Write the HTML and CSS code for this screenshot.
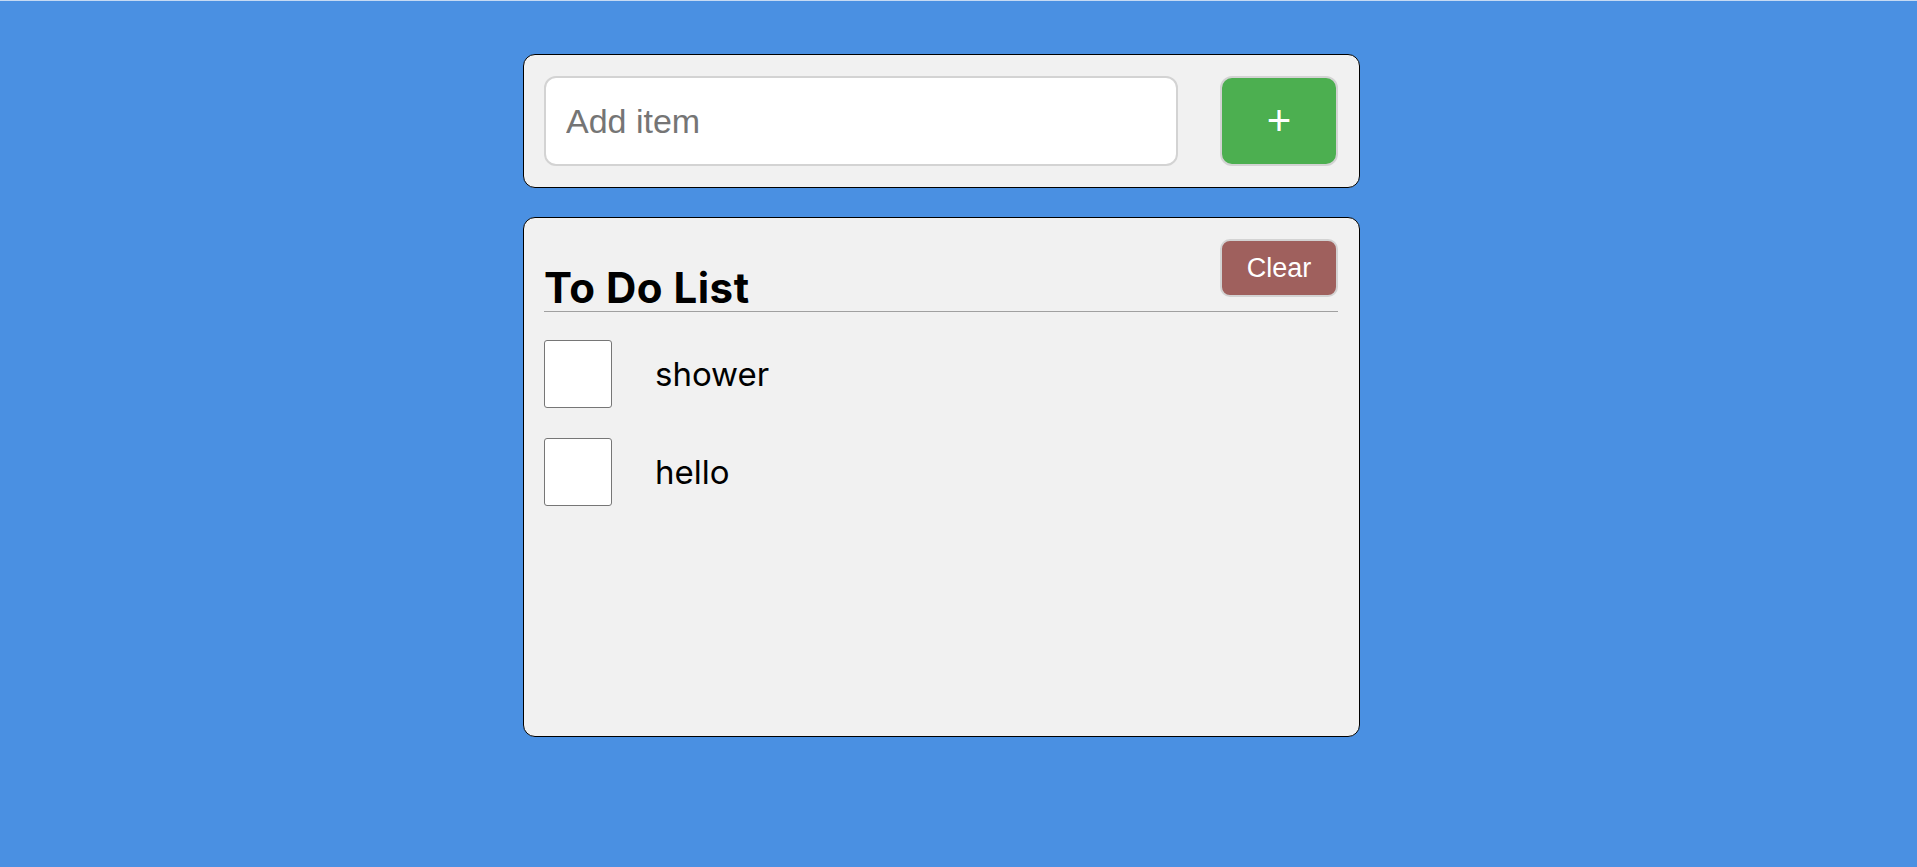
FILE: index.html
```html
<!DOCTYPE html>
<html>
<head>
<meta charset="utf-8">
<title>To Do</title>
<link rel="stylesheet" href="styles.css">
</head>
<body>
<main class="app">
  <form class="card add-card">
    <input class="add-input" type="text" placeholder="Add item">
    <button class="add-btn" type="button">+</button>
  </form>
  <section class="card list-card">
    <header class="list-head">
      <h1 class="list-title">To Do List</h1>
      <button class="clear-btn" type="button">Clear</button>
    </header>
    <ul class="items">
      <li class="item"><input class="check" type="checkbox"><span class="item-text">shower</span></li>
      <li class="item"><input class="check" type="checkbox"><span class="item-text">hello</span></li>
    </ul>
  </section>
</main>
</body>
</html>
```
FILE: styles.css
```css
html, body {
  margin: 0;
  padding: 0;
}
body {
  background: #4a90e2;
  border-top: 1px solid #c6daf3;
  min-height: 866px;
  font-family: "Inter", "Liberation Sans", sans-serif;
}
.app {
  display: flex;
  flex-direction: column;
  gap: 29px;
  width: 837px;
  margin-left: 523px;
  padding-top: 53px;
}
.card {
  box-sizing: border-box;
  background: #f1f1f1;
  border: 1px solid #000;
  border-radius: 12px;
  margin: 0;
}
.add-card {
  display: flex;
  align-items: center;
  padding: 21px 21px 21px 20px;
  height: 134px;
}
.add-input {
  box-sizing: border-box;
  width: 634px;
  height: 90px;
  border: 2px solid #d3d3d3;
  border-radius: 12px;
  background: #fff;
  padding: 0 20px;
  font-family: "Liberation Sans", Arial, sans-serif;
  font-size: 34px;
  color: #333;
  outline: none;
}
.add-input::placeholder {
  color: #757575;
}
.add-btn {
  box-sizing: border-box;
  margin-left: auto;
  width: 118px;
  height: 90px;
  border: 2px solid #d3d3d3;
  border-radius: 12px;
  background: #4caf50;
  color: #fff;
  font-family: "Liberation Sans", Arial, sans-serif;
  font-size: 42px;
  font-weight: 400;
  line-height: 1;
  padding: 0;
}
.list-card {
  height: 520px;
  padding: 21px 21px 20px 20px;
}
.list-head {
  display: flex;
  justify-content: space-between;
  align-items: flex-end;
  border-bottom: 1px solid #a0a0a0;
  height: 73px;
  box-sizing: border-box;
}
.list-title {
  margin: 0 0 2px 0;
  font-size: 42px;
  font-weight: 700;
  line-height: 1;
  color: #000;
  letter-spacing: 0.5px;
}
.clear-btn {
  align-self: flex-start;
  box-sizing: border-box;
  width: 118px;
  height: 58px;
  border: 2px solid #d3d3d3;
  border-radius: 10px;
  background: #9f605d;
  color: #fff;
  font-family: "Liberation Sans", Arial, sans-serif;
  font-size: 27px;
  padding: 0;
}
.items {
  list-style: none;
  margin: 28px 0 0 0;
  padding: 0;
  display: flex;
  flex-direction: column;
  gap: 30px;
}
.item {
  display: flex;
  align-items: center;
  gap: 43px;
}
.check {
  appearance: none;
  -webkit-appearance: none;
  margin: 0;
  width: 68px;
  height: 68px;
  border: 1px solid #767676;
  border-radius: 3px;
  background: #fff;
  flex: none;
}
.item-text {
  font-size: 33px;
  font-weight: 400;
  color: #000;
}
```
